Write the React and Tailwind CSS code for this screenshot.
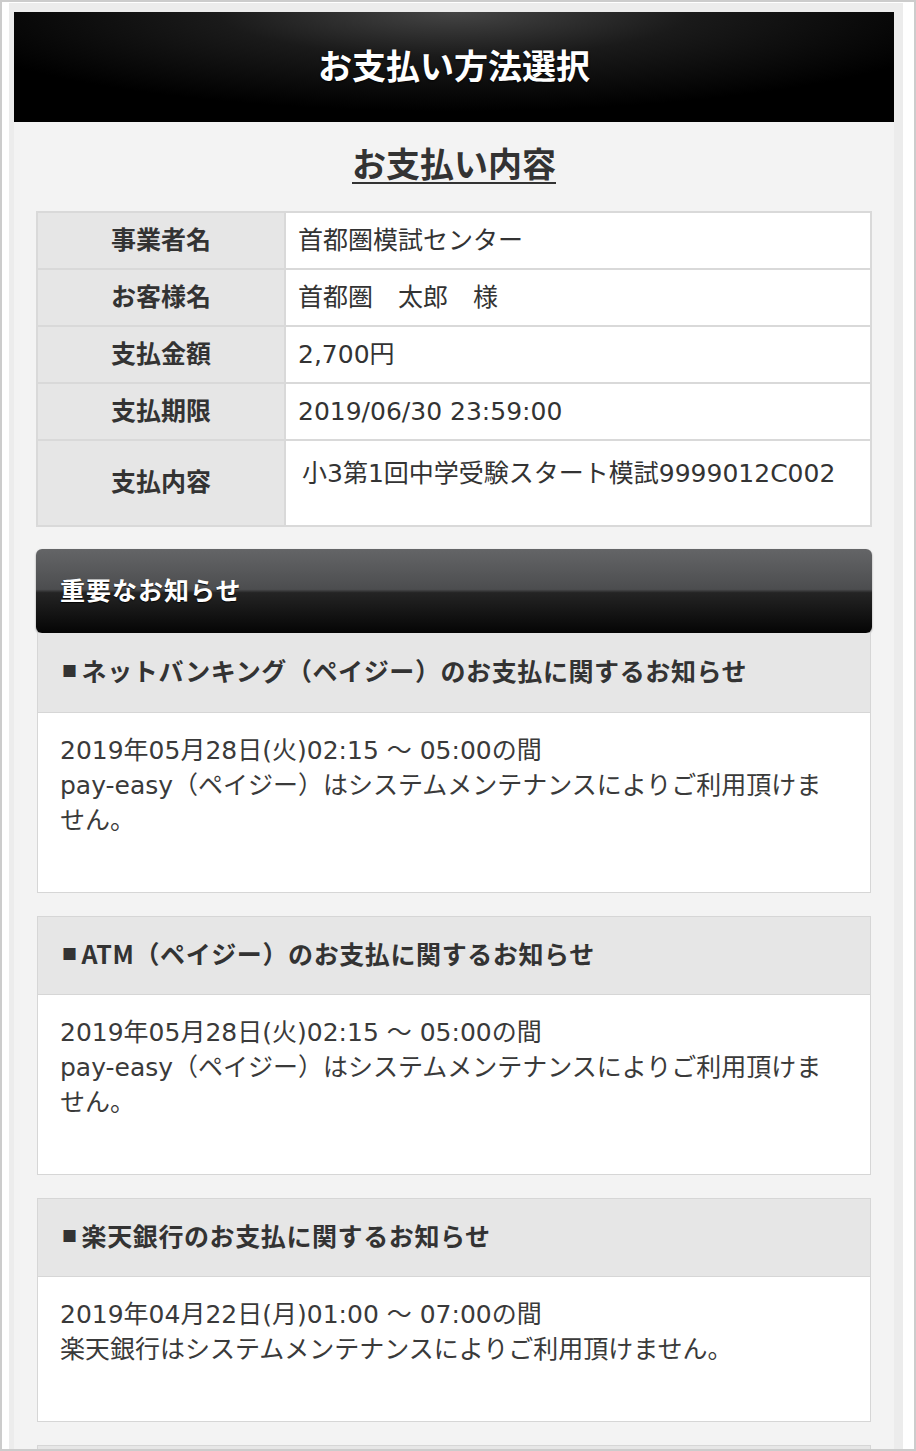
import React from "react";

const rows = [
  { label: "事業者名", value: "首都圏模試センター" },
  { label: "お客様名", value: "首都圏　太郎　様" },
  { label: "支払金額", value: "2,700円" },
  { label: "支払期限", value: "2019/06/30 23:59:00" },
];

const notices = [
  {
    title: "ネットバンキング（ペイジー）のお支払に関するお知らせ",
    lines: [
      "2019年05月28日(火)02:15 ～ 05:00の間",
      "pay-easy（ペイジー）はシステムメンテナンスによりご利用頂けま",
      "せん。",
    ],
  },
  {
    title: "ATM（ペイジー）のお支払に関するお知らせ",
    lines: [
      "2019年05月28日(火)02:15 ～ 05:00の間",
      "pay-easy（ペイジー）はシステムメンテナンスによりご利用頂けま",
      "せん。",
    ],
  },
  {
    title: "楽天銀行のお支払に関するお知らせ",
    lines: [
      "2019年04月22日(月)01:00 ～ 07:00の間",
      "楽天銀行はシステムメンテナンスによりご利用頂けません。",
    ],
  },
];

const latin = { fontFamily: '"DejaVu Sans", "Noto Sans CJK JP", sans-serif' };

function NoticeCard({ notice, first }) {
  return (
    <div
      className={`bg-white border border-[#d6d6d6] ${first ? "border-t-0" : ""}`}
    >
      <div
        className={`flex items-center bg-[#e6e6e6] border-b border-[#d6d6d6] pl-[24px] pb-[4px] ${
          first ? "h-[80px]" : "h-[78px]"
        } text-[25px] font-bold tracking-[0.6px] text-[#333]`}
      >
        <span className="text-[15px] mr-[4px] leading-none">■</span>
        <span>{notice.title}</span>
      </div>
      <div
        className="pl-[22px] pt-[20px] pb-[54px] text-[25px] leading-[35px] text-[#3a3a3a]"
        style={latin}
      >
        {notice.lines.map((l, i) => (
          <div key={i}>{l}</div>
        ))}
      </div>
    </div>
  );
}

export default function App() {
  return (
    <div
      className="h-[1451px] w-[916px] overflow-hidden border-2 border-[#cccccc] bg-white"
      style={{ fontFamily: '"Noto Sans CJK JP", "Noto Sans", sans-serif' }}
    >
      <div className="ml-[7px] mt-px w-[894px] h-[1460px] bg-[#ececec] pt-[9px] pl-[5px] pr-[9px]">
        <div className="h-full bg-[#f3f3f3]">
          {/* page title */}
          <div className="h-[110px] flex items-center justify-center pb-[6px] bg-[radial-gradient(ellipse_60%_90%_at_50%_0%,#454545_0%,#1a1a1a_45%,#000_100%)]">
            <h1 className="text-[34px] font-bold text-white [text-shadow:0_1px_2px_rgba(0,0,0,0.8)]">
              お支払い方法選択
            </h1>
          </div>

          <div className="pt-[21px] pb-[28px] text-center">
            <h2 className="text-[34px] leading-[40px] font-bold text-[#333] underline decoration-2 underline-offset-[5px]">
              お支払い内容
            </h2>
          </div>

          {/* summary table */}
          <div className="mx-[22px] border-2 border-[#d9d9d9] bg-white text-[25px] text-[#333]">
            {rows.map((r) => (
              <div
                key={r.label}
                className="grid grid-cols-[248px_1fr] h-[57px] border-b-2 border-[#d9d9d9]"
              >
                <div className="flex items-center justify-center pb-[4px] bg-[#e6e6e6] border-r-2 border-[#d9d9d9] font-bold">
                  {r.label}
                </div>
                <div className="flex items-center pl-[12px]" style={latin}>
                  {r.value}
                </div>
              </div>
            ))}
            <div className="grid grid-cols-[248px_1fr] h-[84px]">
              <div className="flex items-center justify-center pb-[4px] bg-[#e6e6e6] border-r-2 border-[#d9d9d9] font-bold">
                支払内容
              </div>
              <div className="pl-[16px] pt-[15px] leading-[35px]" style={latin}>
                小3第1回中学受験スタート模試9999012C002
              </div>
            </div>
          </div>

          {/* notices */}
          <div className="mx-[22px] mt-[22px]">
            <div className="h-[84px] flex items-center pl-[24px] pb-[2px] rounded-md bg-[linear-gradient(to_bottom,#646567_0%,#4c4d4f_48%,#242424_52%,#050505_100%)] shadow-[0_1px_2px_rgba(0,0,0,0.4)] text-[25px] font-bold tracking-[1px] text-white [text-shadow:0_1px_1px_rgba(0,0,0,0.9)]">
              重要なお知らせ
            </div>
            <div className="px-px flex flex-col gap-[23px]">
              {notices.map((n, i) => (
                <NoticeCard key={i} notice={n} first={i === 0} />
              ))}
              <div className="h-[40px] bg-[#e6e6e6] border border-[#d6d6d6]" />
            </div>
          </div>
        </div>
      </div>
    </div>
  );
}
